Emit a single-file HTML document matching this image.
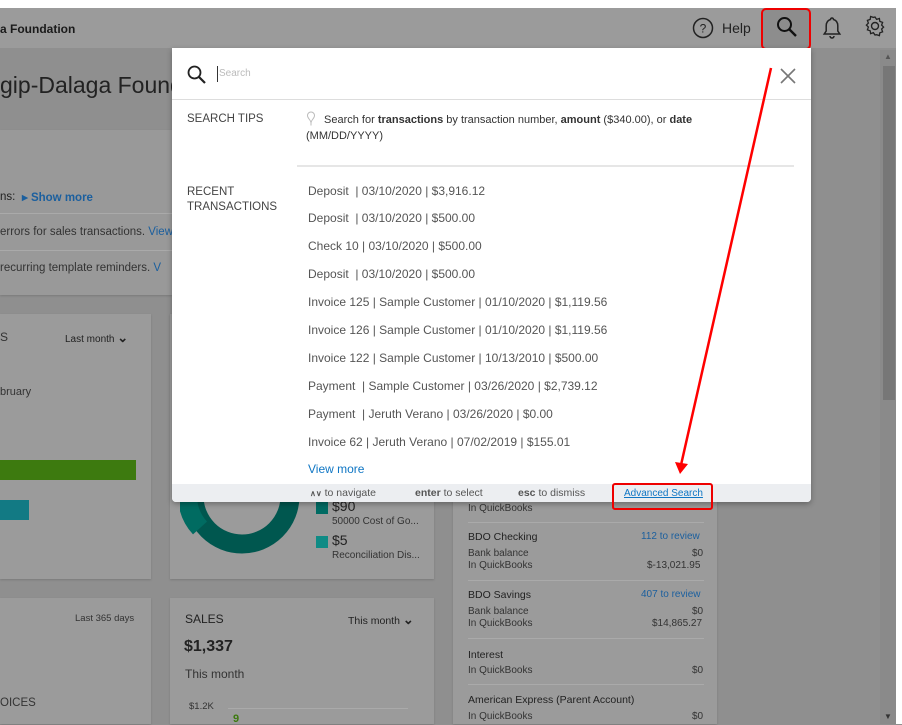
<!DOCTYPE html>
<html><head><style>
*{margin:0;padding:0;box-sizing:border-box}
body{width:902px;height:724px;overflow:hidden;background:#8f8f8f;font-family:"Liberation Sans",sans-serif;position:relative;color:#333}
.a{position:absolute}
.card{position:absolute;background:#9b9b9b;box-shadow:0 1px 2px rgba(0,0,0,.15)}
.t{position:absolute;white-space:nowrap}
.m .t{color:#555;font-size:12px}
</style></head><body>
<div class="a" style="left:0;top:0;width:902px;height:8px;background:#fff"></div>
<div class="a" style="left:0;top:8px;width:896px;height:40px;background:#9b9b9b"></div>
<div class="a" style="left:896px;top:0;width:6px;height:724px;background:#fff"></div>
<div class="t" style="left:0;top:22px;font-size:12px;color:#1a1a1a;font-weight:bold">a Foundation</div>
<svg class="a" style="left:692px;top:17px" width="22" height="22"><circle cx="11" cy="11" r="9.5" fill="none" stroke="#222" stroke-width="1.5"/><text x="11" y="15.5" font-size="12" text-anchor="middle" fill="#222" font-family="Liberation Sans">?</text></svg>
<div class="t" style="left:722px;top:20px;font-size:14px;color:#222">Help</div>
<div class="a" style="left:761px;top:8px;width:50px;height:42px;background:#8d8d8d;border:2px solid #e00;border-radius:5px"></div>
<svg class="a" style="left:776px;top:16px" width="22" height="22"><circle cx="8.5" cy="8.5" r="6.5" fill="none" stroke="#111" stroke-width="2"/><line x1="13" y1="13" x2="20" y2="20" stroke="#111" stroke-width="2.4"/></svg>
<svg class="a" style="left:822px;top:16px" width="20" height="24"><path d="M10 2a1.5 1.5 0 0 1 1.5 1.5c3 .8 4.3 3.5 4.3 6.5v5l2 3H2.2l2-3v-5c0-3 1.3-5.7 4.3-6.5A1.5 1.5 0 0 1 10 2z" fill="none" stroke="#222" stroke-width="1.5"/><path d="M8 20a2 2 0 0 0 4 0" fill="none" stroke="#222" stroke-width="1.5"/></svg>
<svg class="a" style="left:864px;top:15px" width="22" height="22"><circle cx="11" cy="11" r="3.5" fill="none" stroke="#222" stroke-width="1.4"/><path d="M11 2l1.6 2.4 2.8-.9.4 2.9 2.8 1-1 2.7 2 2-2 1.9 1 2.8-2.8 1-.4 2.8-2.8-.9L11 20l-1.6-2.3-2.8.9-.4-2.8-2.8-1 1-2.8-2-1.9 2-2-1-2.7 2.8-1 .4-2.9 2.8.9z" fill="none" stroke="#222" stroke-width="1.3"/></svg>
<!-- scrollbar -->
<div class="a" style="left:880px;top:50px;width:16px;height:674px;background:#8a8a8a"></div>
<div class="a" style="left:883px;top:66px;width:12px;height:334px;background:#777"></div>
<div class="t" style="left:884px;top:52px;font-size:8px;color:#555">▲</div>
<div class="t" style="left:884px;top:712px;font-size:8px;color:#333">▼</div>
<div class="t" style="left:0;top:72px;font-size:23px;color:#222">gip-Dalaga Found</div>
<div class="card" style="left:0;top:130px;width:172px;height:165px;background:#999"></div>
<div class="a" style="left:0;top:213px;width:172px;height:1px;background:#aaa"></div>
<div class="a" style="left:0;top:250px;width:172px;height:1px;background:#aaa"></div>
<div class="t" style="left:0;top:191px;font-size:11.5px;color:#222">ns:</div>
<div class="t" style="left:22px;top:190px;font-size:11.5px;color:#1b5f9e;font-weight:bold">▸ Show more</div>
<div class="t" style="left:0;top:226px;font-size:11.5px;color:#333">errors for sales transactions. <span style="color:#1b5f9e">View</span></div>
<div class="t" style="left:0;top:262px;font-size:11.5px;color:#333">recurring template reminders. <span style="color:#1b5f9e">V</span></div>
<div class="card" style="left:0;top:314px;width:151px;height:265px"></div>
<div class="t" style="left:0;top:330px;font-size:12px">S</div>
<div class="t" style="left:65px;top:330px;font-size:10px;color:#222">Last month <b style="font-size:13px">⌄</b></div>
<div class="t" style="left:0;top:386px;font-size:11px">bruary</div>
<div class="a" style="left:0;top:460px;width:136px;height:20px;background:#3d7a0f"></div>
<div class="a" style="left:0;top:500px;width:29px;height:20px;background:#127a84"></div>
<div class="card" style="left:170px;top:314px;width:264px;height:265px"></div>
<svg class="a" style="left:180px;top:430px" width="130" height="130"><circle cx="62" cy="66" r="48" fill="none" stroke="#00574f" stroke-width="19"/><path d="M62 18 A48 48 0 0 0 20 98" fill="none" stroke="#006b61" stroke-width="19"/></svg>
<div class="a" style="left:316px;top:502px;width:12px;height:12px;background:#006b63"></div>
<div class="t" style="left:332px;top:498px;font-size:14px;color:#222">$90</div>
<div class="t" style="left:332px;top:516px;font-size:10px;color:#333">50000 Cost of Go...</div>
<div class="a" style="left:316px;top:536px;width:12px;height:12px;background:#0f8b85"></div>
<div class="t" style="left:332px;top:532px;font-size:14px;color:#222">$5</div>
<div class="t" style="left:332px;top:550px;font-size:10px;color:#333">Reconciliation Dis...</div>
<div class="card" style="left:453px;top:480px;width:264px;height:244px"></div>
<div class="t" style="left:468px;top:503px;font-size:10px">In QuickBooks</div>
<div class="a" style="left:468px;top:522px;width:236px;height:1px;background:#aaa"></div>
<div class="t" style="left:468px;top:531px;font-size:10.5px;color:#222">BDO Checking</div>
<div class="t" style="left:641px;top:531px;font-size:10px;color:#1b5f9e">112 to review</div>
<div class="t" style="left:468px;top:548px;font-size:10px">Bank balance</div><div class="t" style="left:692px;top:548px;font-size:10px">$0</div>
<div class="t" style="left:468px;top:560px;font-size:10px">In QuickBooks</div><div class="t" style="left:647px;top:560px;font-size:10px">$-13,021.95</div>
<div class="a" style="left:468px;top:580px;width:236px;height:1px;background:#aaa"></div>
<div class="t" style="left:468px;top:589px;font-size:10.5px;color:#222">BDO Savings</div>
<div class="t" style="left:641px;top:589px;font-size:10px;color:#1b5f9e">407 to review</div>
<div class="t" style="left:468px;top:606px;font-size:10px">Bank balance</div><div class="t" style="left:692px;top:606px;font-size:10px">$0</div>
<div class="t" style="left:468px;top:618px;font-size:10px">In QuickBooks</div><div class="t" style="left:652px;top:618px;font-size:10px">$14,865.27</div>
<div class="a" style="left:468px;top:638px;width:236px;height:1px;background:#aaa"></div>
<div class="t" style="left:468px;top:649px;font-size:10.5px;color:#222">Interest</div>
<div class="t" style="left:468px;top:665px;font-size:10px">In QuickBooks</div><div class="t" style="left:692px;top:665px;font-size:10px">$0</div>
<div class="a" style="left:468px;top:684px;width:236px;height:1px;background:#aaa"></div>
<div class="t" style="left:468px;top:694px;font-size:10.5px;color:#222">American Express (Parent Account)</div>
<div class="t" style="left:468px;top:711px;font-size:10px">In QuickBooks</div><div class="t" style="left:692px;top:711px;font-size:10px">$0</div>
<div class="card" style="left:0;top:598px;width:151px;height:126px"></div>
<div class="t" style="left:75px;top:613px;font-size:9.5px">Last 365 days</div>
<div class="t" style="left:0;top:697px;font-size:11.5px">OICES</div>
<div class="card" style="left:170px;top:598px;width:264px;height:126px"></div>
<div class="t" style="left:185px;top:612px;font-size:12px;color:#222">SALES</div>
<div class="t" style="left:348px;top:612px;font-size:10.5px;color:#222">This month <b style="font-size:13px">⌄</b></div>
<div class="t" style="left:184px;top:638px;font-size:16px;font-weight:bold;color:#222">$1,337</div>
<div class="t" style="left:185px;top:667px;font-size:12px">This month</div>
<div class="t" style="left:189px;top:701px;font-size:9.5px">$1.2K</div>
<div class="a" style="left:228px;top:708px;width:180px;height:1px;background:#aaa"></div>
<div class="t" style="left:233px;top:713px;font-size:11px;color:#3d7a0f;font-weight:bold">9</div>
<!-- modal -->
<div class="a m" style="left:172px;top:48px;width:639px;height:454px;background:#fff;border-radius:0 0 4px 4px;box-shadow:0 2px 6px rgba(0,0,0,.3)">
<svg class="a" style="left:15px;top:17px" width="20" height="20"><circle cx="7.5" cy="7.5" r="6" fill="none" stroke="#222" stroke-width="1.8"/><line x1="11.5" y1="11.5" x2="18" y2="18" stroke="#222" stroke-width="2.2"/></svg>
<div class="a" style="left:45px;top:18px;width:1px;height:16px;background:#333"></div>
<div class="t" style="left:47px;top:20px;font-size:10px;color:#bbb">Search</div>
<svg class="a" style="left:608px;top:20px" width="16" height="16"><path d="M1 1L15 15M15 1L1 15" stroke="#777" stroke-width="1.6"/></svg>
<div class="a" style="left:0;top:51px;width:639px;height:1px;background:#ddd"></div>
<div class="t" style="left:15px;top:65px;font-size:11.5px;color:#444">SEARCH TIPS</div>
<svg class="a" style="left:134px;top:63px" width="10" height="15"><path d="M5 1a3.5 3.5 0 0 0-3.5 3.5C1.5 7.5 5 9 5 12 5 9 8.5 7.5 8.5 4.5A3.5 3.5 0 0 0 5 1z" fill="none" stroke="#bbb"/><line x1="5" y1="12" x2="5" y2="14.5" stroke="#bbb"/></svg>
<div class="t" style="left:152px;top:66px;font-size:11px;color:#333">Search for <b>transactions</b> by transaction number, <b>amount</b> ($340.00), or <b>date</b></div>
<div class="t" style="left:134px;top:82px;font-size:11px;color:#333">(MM/DD/YYYY)</div>
<div class="a" style="left:125px;top:117px;width:497px;height:2px;background:#e6e6e6"></div>
<div class="t" style="left:15px;top:137px;font-size:11.5px;color:#444;line-height:15px">RECENT<br>TRANSACTIONS</div>
<div class="t" style="left:136px;top:136px">Deposit &nbsp;| 03/10/2020 | $3,916.12</div>
<div class="t" style="left:136px;top:163px">Deposit &nbsp;| 03/10/2020 | $500.00</div>
<div class="t" style="left:136px;top:191px">Check 10 | 03/10/2020 | $500.00</div>
<div class="t" style="left:136px;top:219px">Deposit &nbsp;| 03/10/2020 | $500.00</div>
<div class="t" style="left:136px;top:247px">Invoice 125 | Sample Customer | 01/10/2020 | $1,119.56</div>
<div class="t" style="left:136px;top:275px">Invoice 126 | Sample Customer | 01/10/2020 | $1,119.56</div>
<div class="t" style="left:136px;top:303px">Invoice 122 | Sample Customer | 10/13/2010 | $500.00</div>
<div class="t" style="left:136px;top:331px">Payment &nbsp;| Sample Customer | 03/26/2020 | $2,739.12</div>
<div class="t" style="left:136px;top:359px">Payment &nbsp;| Jeruth Verano | 03/26/2020 | $0.00</div>
<div class="t" style="left:136px;top:387px">Invoice 62 | Jeruth Verano | 07/02/2019 | $155.01</div>
<div class="t" style="left:136px;top:414px;color:#0f76c4">View more</div>
<div class="a" style="left:0;top:436px;width:639px;height:18px;background:#eceef1;border-radius:0 0 4px 4px"></div>
<div class="t" style="left:138px;top:439px;font-size:10.5px;color:#555"><b style="font-size:8px">∧∨</b> to navigate</div>
<div class="t" style="left:243px;top:439px;font-size:10.5px;color:#555"><b>enter</b> to select</div>
<div class="t" style="left:346px;top:439px;font-size:10.5px;color:#555"><b>esc</b> to dismiss</div>
<div class="t" style="left:452px;top:440px;font-size:10px;color:#0f76c4;text-decoration:underline">Advanced Search</div>
</div>
<div class="a" style="left:612px;top:483px;width:101px;height:27px;border:2px solid #e00;border-radius:3px"></div>
<svg class="a" style="left:0;top:0" width="902" height="724"><line x1="771" y1="68" x2="681" y2="465" stroke="#f00" stroke-width="2.5"/><polygon points="675,462 688,464 680,474" fill="#f00"/></svg>
</body></html>
